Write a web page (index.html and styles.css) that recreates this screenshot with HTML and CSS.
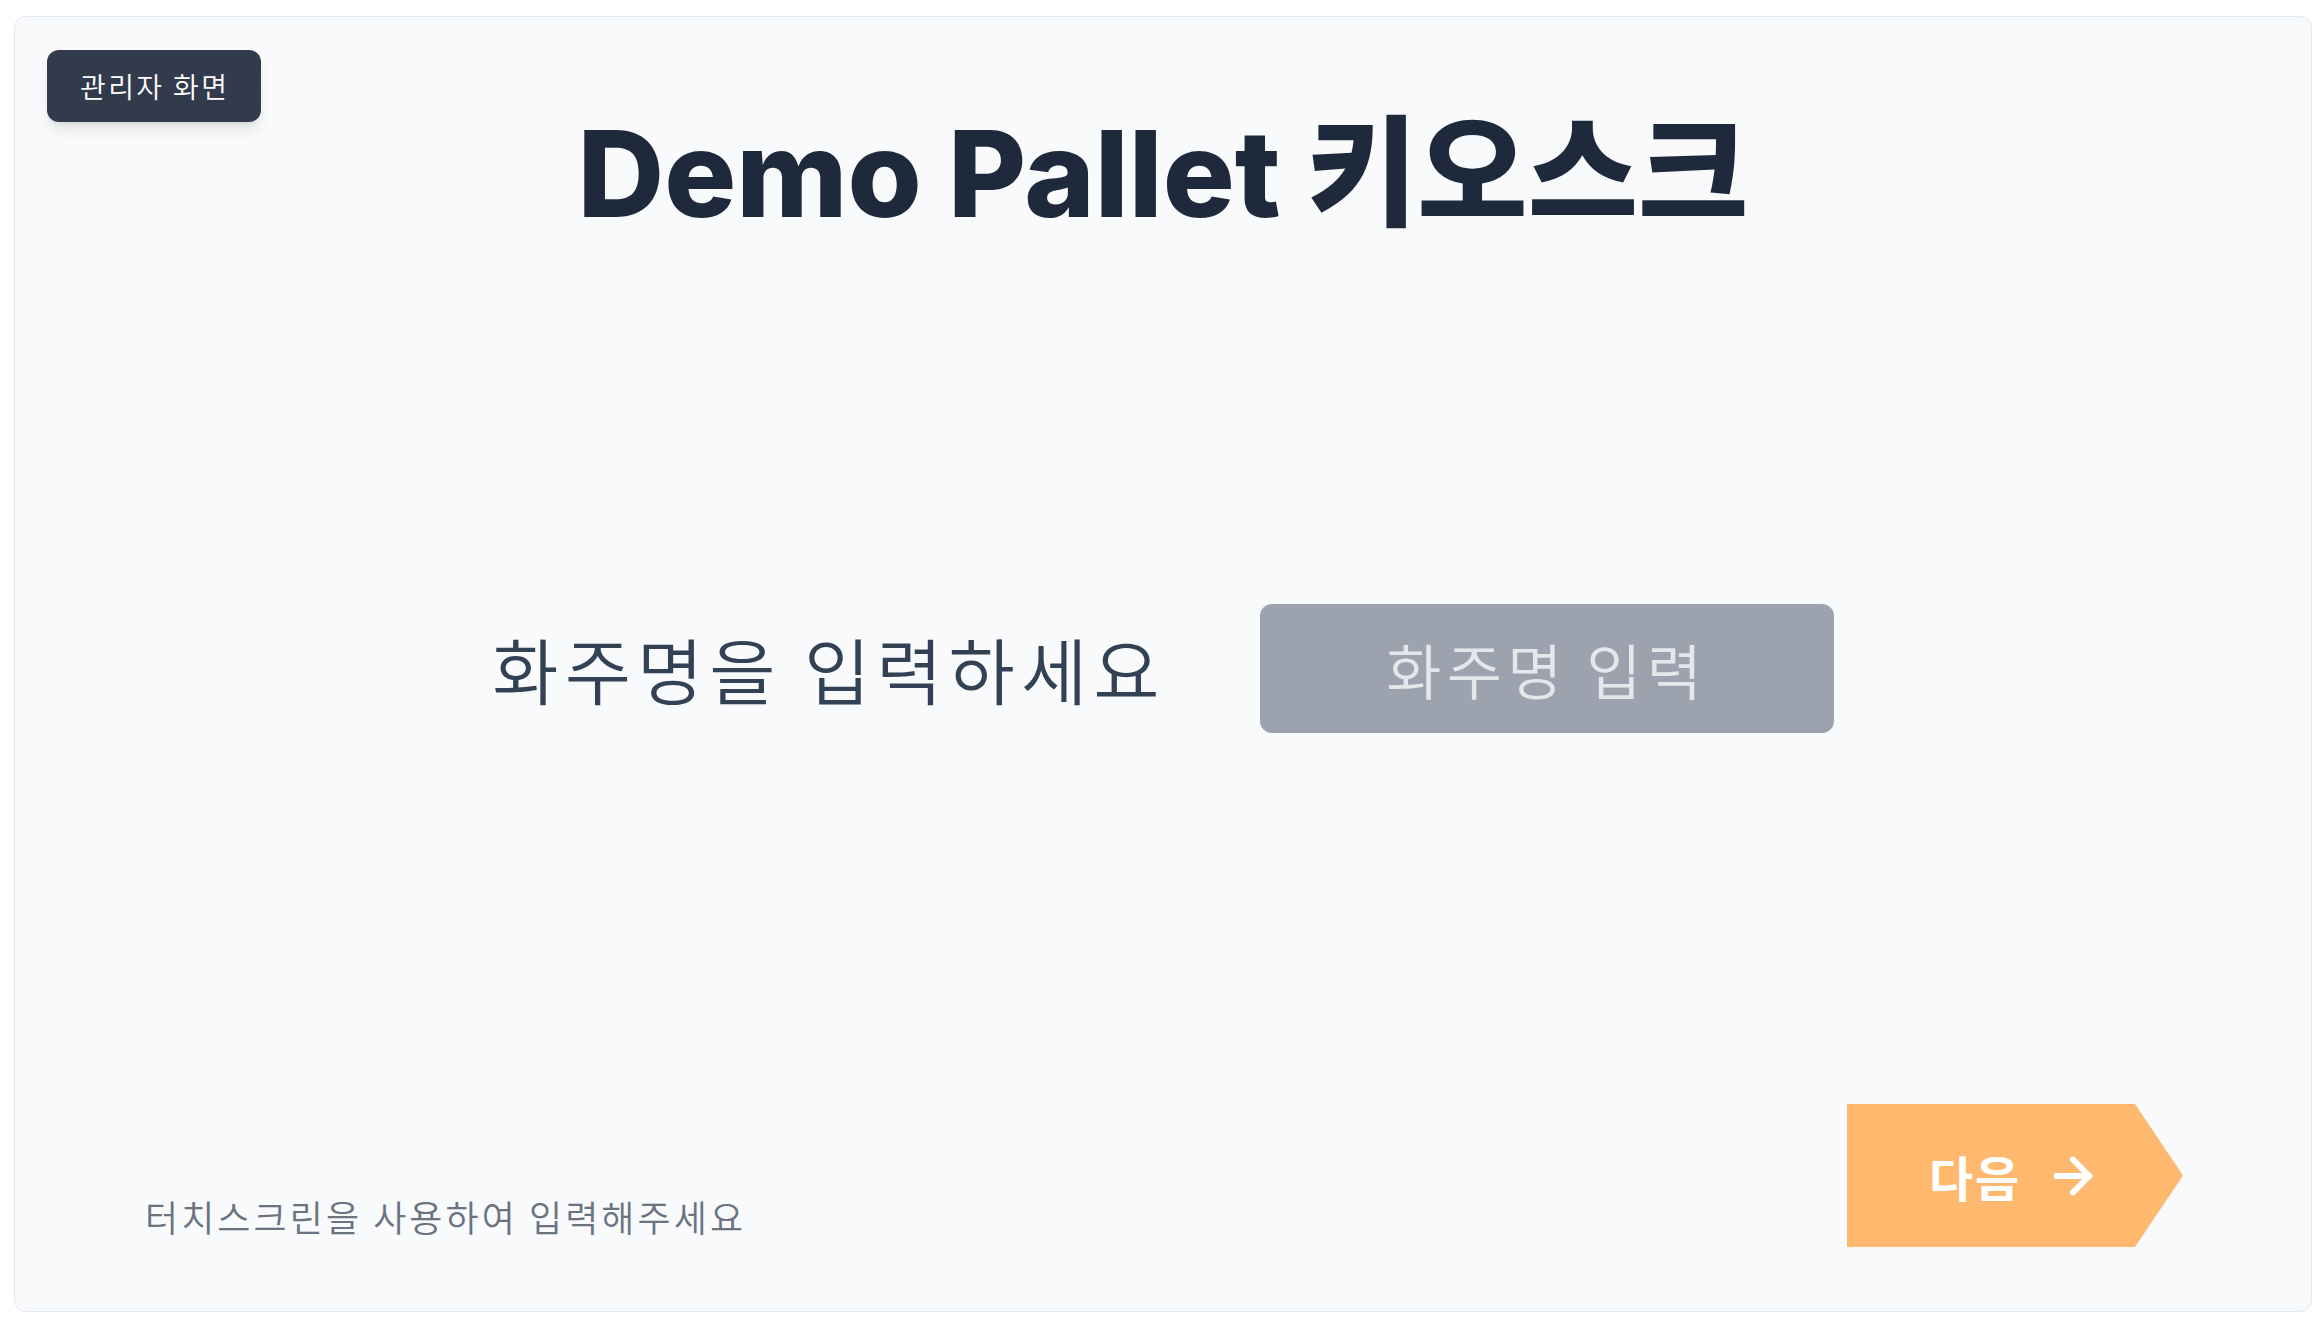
FILE: index.html
```html
<!DOCTYPE html>
<html>
<head>
<meta charset="utf-8">
<title>Demo Pallet 키오스크</title>
<link rel="stylesheet" href="styles.css">
</head>
<body>
<div class="page">
  <main class="card">
    <button class="admin-btn" type="button">관리자 화면</button>
    <h1 class="title">Demo Pallet 키오스크</h1>
    <section class="middle">
      <p class="prompt">화주명을 입력하세요</p>
      <input class="name-input" type="text" placeholder="화주명 입력">
    </section>
    <footer class="footer">
      <p class="hint">터치스크린을 사용하여 입력해주세요</p>
      <button class="next-btn" type="button">
        <span class="next-label">다음</span>
        <svg class="next-icon" viewBox="0 0 24 24" fill="none" stroke="currentColor" stroke-width="2.5" stroke-linecap="round" stroke-linejoin="round" aria-hidden="true">
          <path d="M5 12h14"/>
          <path d="m12 5 7 7-7 7"/>
        </svg>
      </button>
    </footer>
  </main>
</div>
</body>
</html>
```
FILE: styles.css
```css
* {
  box-sizing: border-box;
}

html, body {
  margin: 0;
  padding: 0;
  height: 100%;
  background: #ffffff;
}

body {
  font-family: "Noto Sans CJK JP", "Noto Sans CJK SC", sans-serif;
}

.page {
  height: 1322px;
  padding: 16px 8px 10px 14px;
}

.card {
  position: relative;
  height: 100%;
  display: flex;
  flex-direction: column;
  background: #f8fafc;
  border: 1px solid #e2e8f0;
  border-radius: 12px;
  padding-top: 86px;
}

.admin-btn {
  position: absolute;
  top: 33px;
  left: 32px;
  height: 72px;
  padding: 0 32px 0 33px;
  display: flex;
  align-items: center;
  border: none;
  border-radius: 12px;
  background: #323b4c;
  color: #ffffff;
  font-family: "Noto Sans CJK JP", sans-serif;
  font-size: 28px;
  font-weight: 350;
  letter-spacing: 0.085em;
  box-shadow: 0 10px 15px -3px rgba(0, 0, 0, 0.1), 0 4px 6px -4px rgba(0, 0, 0, 0.1);
  cursor: pointer;
}

.title {
  margin: 0;
  text-align: center;
  font-family: Inter, "Noto Sans CJK JP", sans-serif;
  font-size: 120px;
  font-weight: 800;
  line-height: 1.18;
  color: #1e293b;
}

.middle {
  flex: 1;
  display: flex;
  align-items: center;
  justify-content: center;
  gap: 94px;
  padding-bottom: 12px;
}

.prompt {
  margin: 0;
  font-size: 72px;
  font-weight: 350;
  line-height: 1.2;
  letter-spacing: 0.085em;
  color: #334155;
}

.name-input {
  width: 574px;
  height: 129px;
  border: none;
  border-radius: 12px;
  background: #9ca3af;
  color: #ffffff;
  font-family: "Noto Sans CJK JP", sans-serif;
  font-size: 60px;
  font-weight: 350;
  letter-spacing: 0.088em;
  text-align: center;
  outline: none;
}

.name-input::placeholder {
  color: #e5e7eb;
  opacity: 1;
}

.footer {
  display: flex;
  justify-content: space-between;
  align-items: flex-end;
  padding: 0 128px 64px 130px;
}

.hint {
  margin: 0 0 4px;
  font-size: 36px;
  font-weight: 350;
  line-height: 1.5;
  letter-spacing: 0.085em;
  color: #6b7280;
}

.next-btn {
  width: 336px;
  height: 143px;
  display: flex;
  align-items: center;
  justify-content: center;
  gap: 24px;
  border: none;
  background: #feb96e;
  color: #ffffff;
  clip-path: polygon(0 0, 288px 0, 100% 50%, 288px 100%, 0 100%);
  cursor: pointer;
  padding: 0;
}

.next-label {
  font-family: "Noto Sans CJK JP", sans-serif;
  font-size: 48px;
  font-weight: 700;
  line-height: 1;
  letter-spacing: 0.04em;
}

.next-icon {
  width: 56px;
  height: 56px;
  display: block;
}
```
